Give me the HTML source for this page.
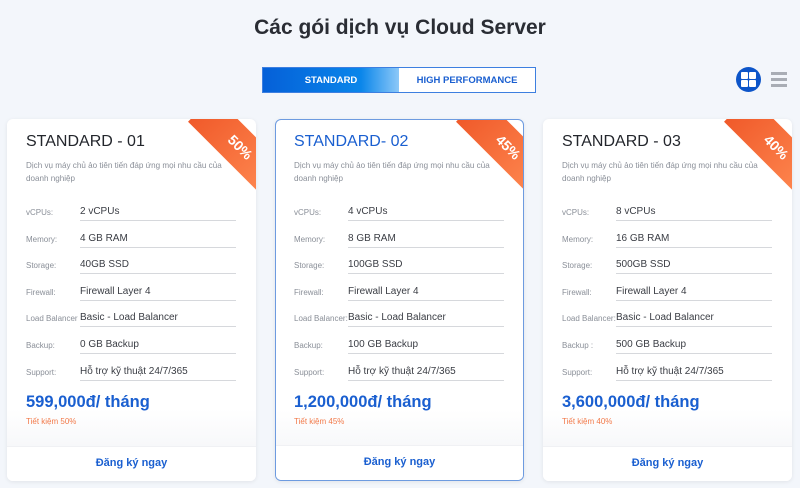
<!DOCTYPE html>
<html><head><meta charset="utf-8"><style>
*{margin:0;padding:0;box-sizing:border-box}
body{width:800px;height:488px;overflow:hidden;background:#f3f6fb;font-family:"Liberation Sans",sans-serif;position:relative}
h1{position:absolute;top:16px;left:0;width:800px;text-align:center;font-size:21px;font-weight:bold;color:#2a2d34}
.tog{position:absolute;left:262px;top:67px;width:274px;height:26px;border:1px solid #3d7fe0;display:flex;background:#fff}
.tog div{display:flex;align-items:center;justify-content:center;font-size:9.5px;font-weight:bold}
.t1{width:136px;background:linear-gradient(90deg,#0560d8 0%,#0a86ea 72%,#8cc8f8 100%);color:#fff}
.t2{flex:1;color:#1a5fd0}
.grid{position:absolute;left:736px;top:67px;width:25px;height:25px;border-radius:50%;background:#0d55c9}
.grid i{position:absolute;width:7px;height:7px;background:#fff;border-radius:1px}
.list{position:absolute;left:771px;top:72px;width:16px}
.list i{display:block;height:3px;background:#a9adb5;margin-bottom:3px}
.card{position:absolute;top:119px;width:249px;height:362px;background:#fff;border-radius:6px;overflow:hidden;box-shadow:0 1px 4px rgba(0,0,0,.08)}
.card.b{border:1px solid #6d9be0}
.rib{position:absolute;z-index:2;left:178px;top:10px;width:110px;height:37px;transform:rotate(45deg);background:linear-gradient(90deg,#f05a2a,#ff8a52);color:#fff;font-size:14px;font-weight:bold;text-align:center;line-height:37px}
.tt{position:absolute;left:19px;top:14px;font-size:16px;color:#23262c}
.b .tt{color:#1a5fd0}
.ds{position:absolute;left:19px;top:40px;width:205px;font-size:8.1px;line-height:13px;color:#8a8f98}
.row{position:absolute;left:19px;width:212px;height:20px}
.row .l{position:absolute;left:0;top:4px;font-size:8px;color:#8a8f98}
.row .v{position:absolute;left:54px;top:2px;width:156px;height:15px;border-bottom:1.5px solid #d6d8dc;font-size:10px;color:#3a3d44}
.pr{position:absolute;left:19px;top:274px;font-size:16.5px;font-weight:bold;color:#1a5fd0}
.sv{position:absolute;left:19px;top:298px;font-size:8px;color:#f27a4a}
.ft{position:absolute;left:0;bottom:0;width:100%;height:35px;border-top:1px solid #f0f1f4;background:#fff;text-align:center;line-height:33px;font-size:11px;font-weight:bold;color:#1a5fd0}
.sh{position:absolute;left:0;top:290px;width:100%;height:37px;background:linear-gradient(#fff,#f7f8fa)}
</style></head><body>
<h1>Các gói dịch vụ Cloud Server</h1>
<div class="tog"><div class="t1">STANDARD</div><div class="t2">HIGH PERFORMANCE</div></div>
<div class="grid"><i style="left:5px;top:5px"></i><i style="left:13px;top:5px"></i><i style="left:5px;top:13px"></i><i style="left:13px;top:13px"></i></div>
<div class="list"><i></i><i></i><i></i></div>

<div class="card" style="left:7px">
<div class="sh"></div>
<div class="rib">50%</div>
<div class="tt">STANDARD - 01</div>
<div class="ds">Dịch vụ máy chủ ảo tiên tiến đáp ứng mọi nhu cầu của doanh nghiệp</div>
<div class="row" style="top:85px"><span class="l">vCPUs:</span><div class="v">2 vCPUs</div></div>
<div class="row" style="top:112px"><span class="l">Memory:</span><div class="v">4 GB RAM</div></div>
<div class="row" style="top:138px"><span class="l">Storage:</span><div class="v">40GB SSD</div></div>
<div class="row" style="top:165px"><span class="l">Firewall:</span><div class="v">Firewall Layer 4</div></div>
<div class="row" style="top:191px"><span class="l">Load Balancer</span><div class="v">Basic - Load Balancer</div></div>
<div class="row" style="top:218px"><span class="l">Backup:</span><div class="v">0 GB Backup</div></div>
<div class="row" style="top:245px"><span class="l">Support:</span><div class="v">Hỗ trợ kỹ thuật 24/7/365</div></div>
<div class="pr">599,000đ/ tháng</div>
<div class="sv">Tiết kiệm 50%</div>
<div class="ft">Đăng ký ngay</div>
</div>

<div class="card b" style="left:275px">
<div class="sh"></div>
<div class="rib" style="left:177px;top:9px">45%</div>
<div class="tt" style="left:18px;top:13px">STANDARD- 02</div>
<div class="ds" style="left:18px;top:39px">Dịch vụ máy chủ ảo tiên tiến đáp ứng mọi nhu cầu của doanh nghiệp</div>
<div class="row" style="top:84px;left:18px"><span class="l">vCPUs:</span><div class="v">4 vCPUs</div></div>
<div class="row" style="top:111px;left:18px"><span class="l">Memory:</span><div class="v">8 GB RAM</div></div>
<div class="row" style="top:137px;left:18px"><span class="l">Storage:</span><div class="v">100GB SSD</div></div>
<div class="row" style="top:164px;left:18px"><span class="l">Firewall:</span><div class="v">Firewall Layer 4</div></div>
<div class="row" style="top:190px;left:18px"><span class="l">Load Balancer:</span><div class="v">Basic - Load Balancer</div></div>
<div class="row" style="top:217px;left:18px"><span class="l">Backup:</span><div class="v">100 GB Backup</div></div>
<div class="row" style="top:244px;left:18px"><span class="l">Support:</span><div class="v">Hỗ trợ kỹ thuật 24/7/365</div></div>
<div class="pr" style="left:18px;top:273px">1,200,000đ/ tháng</div>
<div class="sv" style="left:18px;top:297px">Tiết kiệm 45%</div>
<div class="ft">Đăng ký ngay</div>
</div>

<div class="card" style="left:543px">
<div class="sh"></div>
<div class="rib">40%</div>
<div class="tt">STANDARD - 03</div>
<div class="ds">Dịch vụ máy chủ ảo tiên tiến đáp ứng mọi nhu cầu của doanh nghiệp</div>
<div class="row" style="top:85px"><span class="l">vCPUs:</span><div class="v">8 vCPUs</div></div>
<div class="row" style="top:112px"><span class="l">Memory:</span><div class="v">16 GB RAM</div></div>
<div class="row" style="top:138px"><span class="l">Storage:</span><div class="v">500GB SSD</div></div>
<div class="row" style="top:165px"><span class="l">Firewall:</span><div class="v">Firewall Layer 4</div></div>
<div class="row" style="top:191px"><span class="l">Load Balancer:</span><div class="v">Basic - Load Balancer</div></div>
<div class="row" style="top:218px"><span class="l">Backup :</span><div class="v">500 GB Backup</div></div>
<div class="row" style="top:245px"><span class="l">Support:</span><div class="v">Hỗ trợ kỹ thuật 24/7/365</div></div>
<div class="pr">3,600,000đ/ tháng</div>
<div class="sv">Tiết kiệm 40%</div>
<div class="ft">Đăng ký ngay</div>
</div>
</body></html>
